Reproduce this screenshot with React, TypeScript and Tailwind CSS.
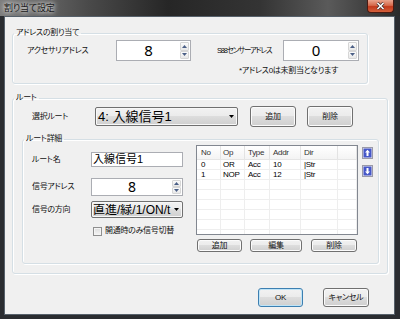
import React from "react";

const jp = "font-['Liberation_Sans','Noto_Sans_CJK_JP',sans-serif] [font-feature-settings:'palt']";
const num = "font-['Noto_Sans','Noto_Sans_CJK_JP',sans-serif]";
const btnBg = "bg-[linear-gradient(#f2f2f2_0%,#ebebeb_50%,#dddddd_50%,#cfcfcf_100%)]";
const lbl = "text-[8px] leading-none tracking-[-0.3px] whitespace-nowrap text-[#111]";

function Tri({ down, color = "#4b5f86" }: { down?: boolean; color?: string }) {
  return (
    <svg width="5" height="3" viewBox="0 0 5 3" className="shrink-0">
      <path d={down ? "M0 0H5L2.5 3Z" : "M0 3H5L2.5 0Z"} fill={color} />
    </svg>
  );
}

function Spin({ value, className, text }: { value: string; className: string; text: string }) {
  return (
    <div className={`flex bg-white border border-[#abadb3] ${className}`}>
      <div className={`flex-1 flex items-center justify-center text-black leading-none ${num} ${text}`}>{value}</div>
      <div className="flex flex-col w-[9px] my-px mr-px">
        <div className="flex-1 flex items-center justify-center rounded-[1px] border border-[#d6d6d6] bg-[linear-gradient(#fbfbfb,#e8e8e8)]">
          <Tri />
        </div>
        <div className="flex-1 flex items-center justify-center rounded-[1px] border border-[#d6d6d6] bg-[linear-gradient(#fbfbfb,#e8e8e8)]">
          <Tri down />
        </div>
      </div>
    </div>
  );
}

function Combo({ text, className, textClass }: { text: string; className: string; textClass: string }) {
  return (
    <div className={`flex items-center border border-[#707070] rounded-[2px] ${btnBg} shadow-[inset_0_0_0_1px_#f8f8f8] ${className}`}>
      <span className={`flex-1 min-w-0 overflow-hidden whitespace-nowrap text-black leading-none ${textClass}`}>{text}</span>
      <span className="mx-[3px] flex items-center">
        <Tri down color="#000" />
      </span>
    </div>
  );
}

function Btn({ label, className, def }: { label: string; className: string; def?: boolean }) {
  return (
    <div
      className={`flex items-center justify-center rounded-[3px] border ${
        def ? "border-[#3c7fb1] shadow-[inset_0_0_0_1px_#bfe4f7]" : "border-[#707070] shadow-[inset_0_0_0_1px_#fbfbfb]"
      } ${btnBg} ${lbl} ${className}`}
    >
      {label}
    </div>
  );
}

function Group({ title, className, children }: { title: string; className: string; children: React.ReactNode }) {
  return (
    <fieldset className={`border border-[#d5dfe5] rounded-[3px] shadow-[inset_1px_1px_0_#fff,1px_1px_0_#fff] ${className}`}>
      <legend className={`ml-[1px] px-[2px] ${lbl} !leading-[12px]`}>{title}</legend>
      {children}
    </fieldset>
  );
}

function MoveBtn({ down }: { down?: boolean }) {
  return (
    <svg width="11" height="12" viewBox="0 0 11 12">
      <rect x="0.5" y="0.5" width="10" height="11" fill="#e9e9ef" stroke="#9a9aa8" />
      <rect x="1.5" y="1.5" width="8" height="9" fill="#4657c8" />
      {down ? (
        <path d="M4.5 3H6.5V6.5H8L5.5 9.2L3 6.5H4.5Z" fill="#fff" />
      ) : (
        <path d="M4.5 9H6.5V5.5H8L5.5 2.8L3 5.5H4.5Z" fill="#fff" />
      )}
    </svg>
  );
}

const rows = [
  ["0", "OR", "Acc", "10", "|Str"],
  ["1", "NOP", "Acc", "12", "|Str"],
  ["", "", "", "", ""],
  ["", "", "", "", ""],
  ["", "", "", "", ""],
  ["", "", "", "", ""],
  ["", "", "", "", ""],
  ["", "", "", "", ""],
];

function ListView() {
  const widths = ["w-[24px] pl-[4px]", "w-[24px] pl-[2px]", "w-[25px] pl-[3px]", "w-[31px] pl-[3px]", "w-[37px] pl-[3px]", "flex-1"];
  const head = ["No", "Op", "Type", "Addr", "Dir", ""];
  return (
    <div className="w-[162px] h-[90px] border border-[#828790] bg-white overflow-hidden">
      <div className="flex h-[14px] border-b border-[#e5e5e5] bg-[linear-gradient(#ffffff,#f4f4f4)]">
        {head.map((h, i) => (
          <div key={i} className={`${widths[i]} border-r border-[#e3e3e3] text-[8px] leading-[13px] tracking-[-0.3px] text-[#333]`}>
            {h}
          </div>
        ))}
      </div>
      {rows.map((r, ri) => (
        <div key={ri} className="flex h-[10px] border-b border-[#eeeeee]">
          {[...r, ""].map((c, ci) => (
            <div key={ci} className={`${widths[ci]} border-r border-[#eeeeee] text-[8px] leading-[9px] tracking-[-0.3px] text-black`}>
              {c}
            </div>
          ))}
        </div>
      ))}
    </div>
  );
}

export default function App() {
  return (
    <div className={`w-[400px] h-[319px] flex flex-col bg-[#2a2c30] ${jp}`}>
      <div className="h-[16px] flex items-start bg-[linear-gradient(90deg,#7d7d7d_0%,#4a4a4a_22%,#262626_42%,#343434_65%,#5a5a5a_82%,#2a2a2a_100%)]">
        <span className="ml-[4px] mt-[3px] text-[9px] leading-[11px] tracking-[-0.2px] text-[#1a1a1a] [text-shadow:0_0_4px_#fff,0_0_6px_#ddd]">
          割り当て設定
        </span>
        <div className="ml-auto mr-[6px] w-[27px] h-[13px] flex items-center justify-center rounded-b-[4px] border border-t-0 border-[#4a1a12] bg-[linear-gradient(#e9a58f,#d66a4c_45%,#c3391c_55%,#d4613c)]">
          <svg width="9" height="8" viewBox="0 0 9 8">
            <path d="M1.5 1L7.5 7M7.5 1L1.5 7" stroke="#3a2a2a" strokeWidth="3" />
            <path d="M1.5 1L7.5 7M7.5 1L1.5 7" stroke="#fff" strokeWidth="1.6" />
          </svg>
        </div>
      </div>
      <div className="ml-[4px] mr-[5px] mb-[4px] flex-1 flex flex-col border border-[#56606a] bg-[#f0f0f0]">
        <Group title="アドレスの割り当て" className="ml-[7px] mt-[10px] w-[356px] h-[57px]">
          <div className="mt-[1px] flex items-center h-[21px]">
            <span className={`ml-[14px] w-[89px] ${lbl}`}>アクセサリアドレス</span>
            <Spin value="8" className="w-[75px] h-[21px]" text="text-[15px]" />
            <span className={`ml-[26px] w-[66px] ${lbl} !text-[7.5px] !tracking-[-1.2px]`}>S88センサーアドレス</span>
            <Spin value="0" className="w-[76px] h-[21px]" text="text-[15px]" />
          </div>
          <div className={`mt-[4px] ml-[226px] ${lbl} !leading-[12px]`}>*アドレス0は未割当となります</div>
        </Group>
        <Group title="ルート" className="ml-[7px] mt-[8px] w-[376px] h-[182px]">
          <div className="mt-[2px] flex items-center h-[21px]">
            <span className={`ml-[19px] w-[63px] ${lbl}`}>選択ルート</span>
            <Combo text="4: 入線信号1" className="w-[143px] h-[19px]" textClass="text-[13px] pl-[2px]" />
            <Btn label="追加" className="ml-[12px] w-[46px] h-[21px]" />
            <Btn label="削除" className="ml-[11px] w-[46px] h-[21px]" />
          </div>
          <Group title="ルート詳細" className="ml-[9px] mt-[6px] w-[357px] h-[131px]">
            <div className="flex">
              <div className="w-[173px] pl-[9px] flex flex-col">
                <div className="mt-[7px] flex items-center h-[15px]">
                  <span className={`w-[59px] ${lbl}`}>ルート名</span>
                  <div className="w-[92px] h-[15px] flex items-center border border-[#abadb3] bg-white pl-[1px] text-[11px] leading-none">
                    入線信号1
                  </div>
                </div>
                <div className="mt-[11px] flex items-center h-[18px]">
                  <span className={`w-[59px] ${lbl}`}>信号アドレス</span>
                  <Spin value="8" className="w-[92px] h-[18px]" text="text-[14px]" />
                </div>
                <div className="mt-[5px] flex items-center h-[17px]">
                  <span className={`w-[59px] ${lbl}`}>信号の方向</span>
                  <Combo text="直進/緑/1/ON/t" className="w-[92px] h-[17px]" textClass="text-[12px] pl-[1px]" />
                </div>
                <div className="mt-[8px] ml-[61px] flex items-center h-[10px]">
                  <div className="w-[9px] h-[9px] border border-[#8f8f8f] bg-[linear-gradient(#dcdcdc,#f6f6f6)] shadow-[inset_0_0_0_1px_#f4f4f4]" />
                  <span className={`ml-[3px] ${lbl}`}>開通時のみ信号切替</span>
                </div>
              </div>
              <div className="flex flex-col">
                <div className="flex">
                  <ListView />
                  <div className="ml-[4px] mt-[2px] flex flex-col gap-[6px]">
                    <MoveBtn />
                    <MoveBtn down />
                  </div>
                </div>
                <div className="mt-[4px] flex">
                  <Btn label="追加" className="ml-[1px] w-[45px] h-[13px]" />
                  <Btn label="編集" className="ml-[8px] w-[52px] h-[13px]" />
                  <Btn label="削除" className="ml-[9px] w-[46px] h-[13px]" />
                </div>
              </div>
            </div>
          </Group>
        </Group>
        <div className="mt-[14px] flex">
          <Btn label="OK" def className="ml-[253px] w-[45px] h-[19px]" />
          <Btn label="キャンセル" className="ml-[20px] w-[46px] h-[19px]" />
        </div>
      </div>
    </div>
  );
}
